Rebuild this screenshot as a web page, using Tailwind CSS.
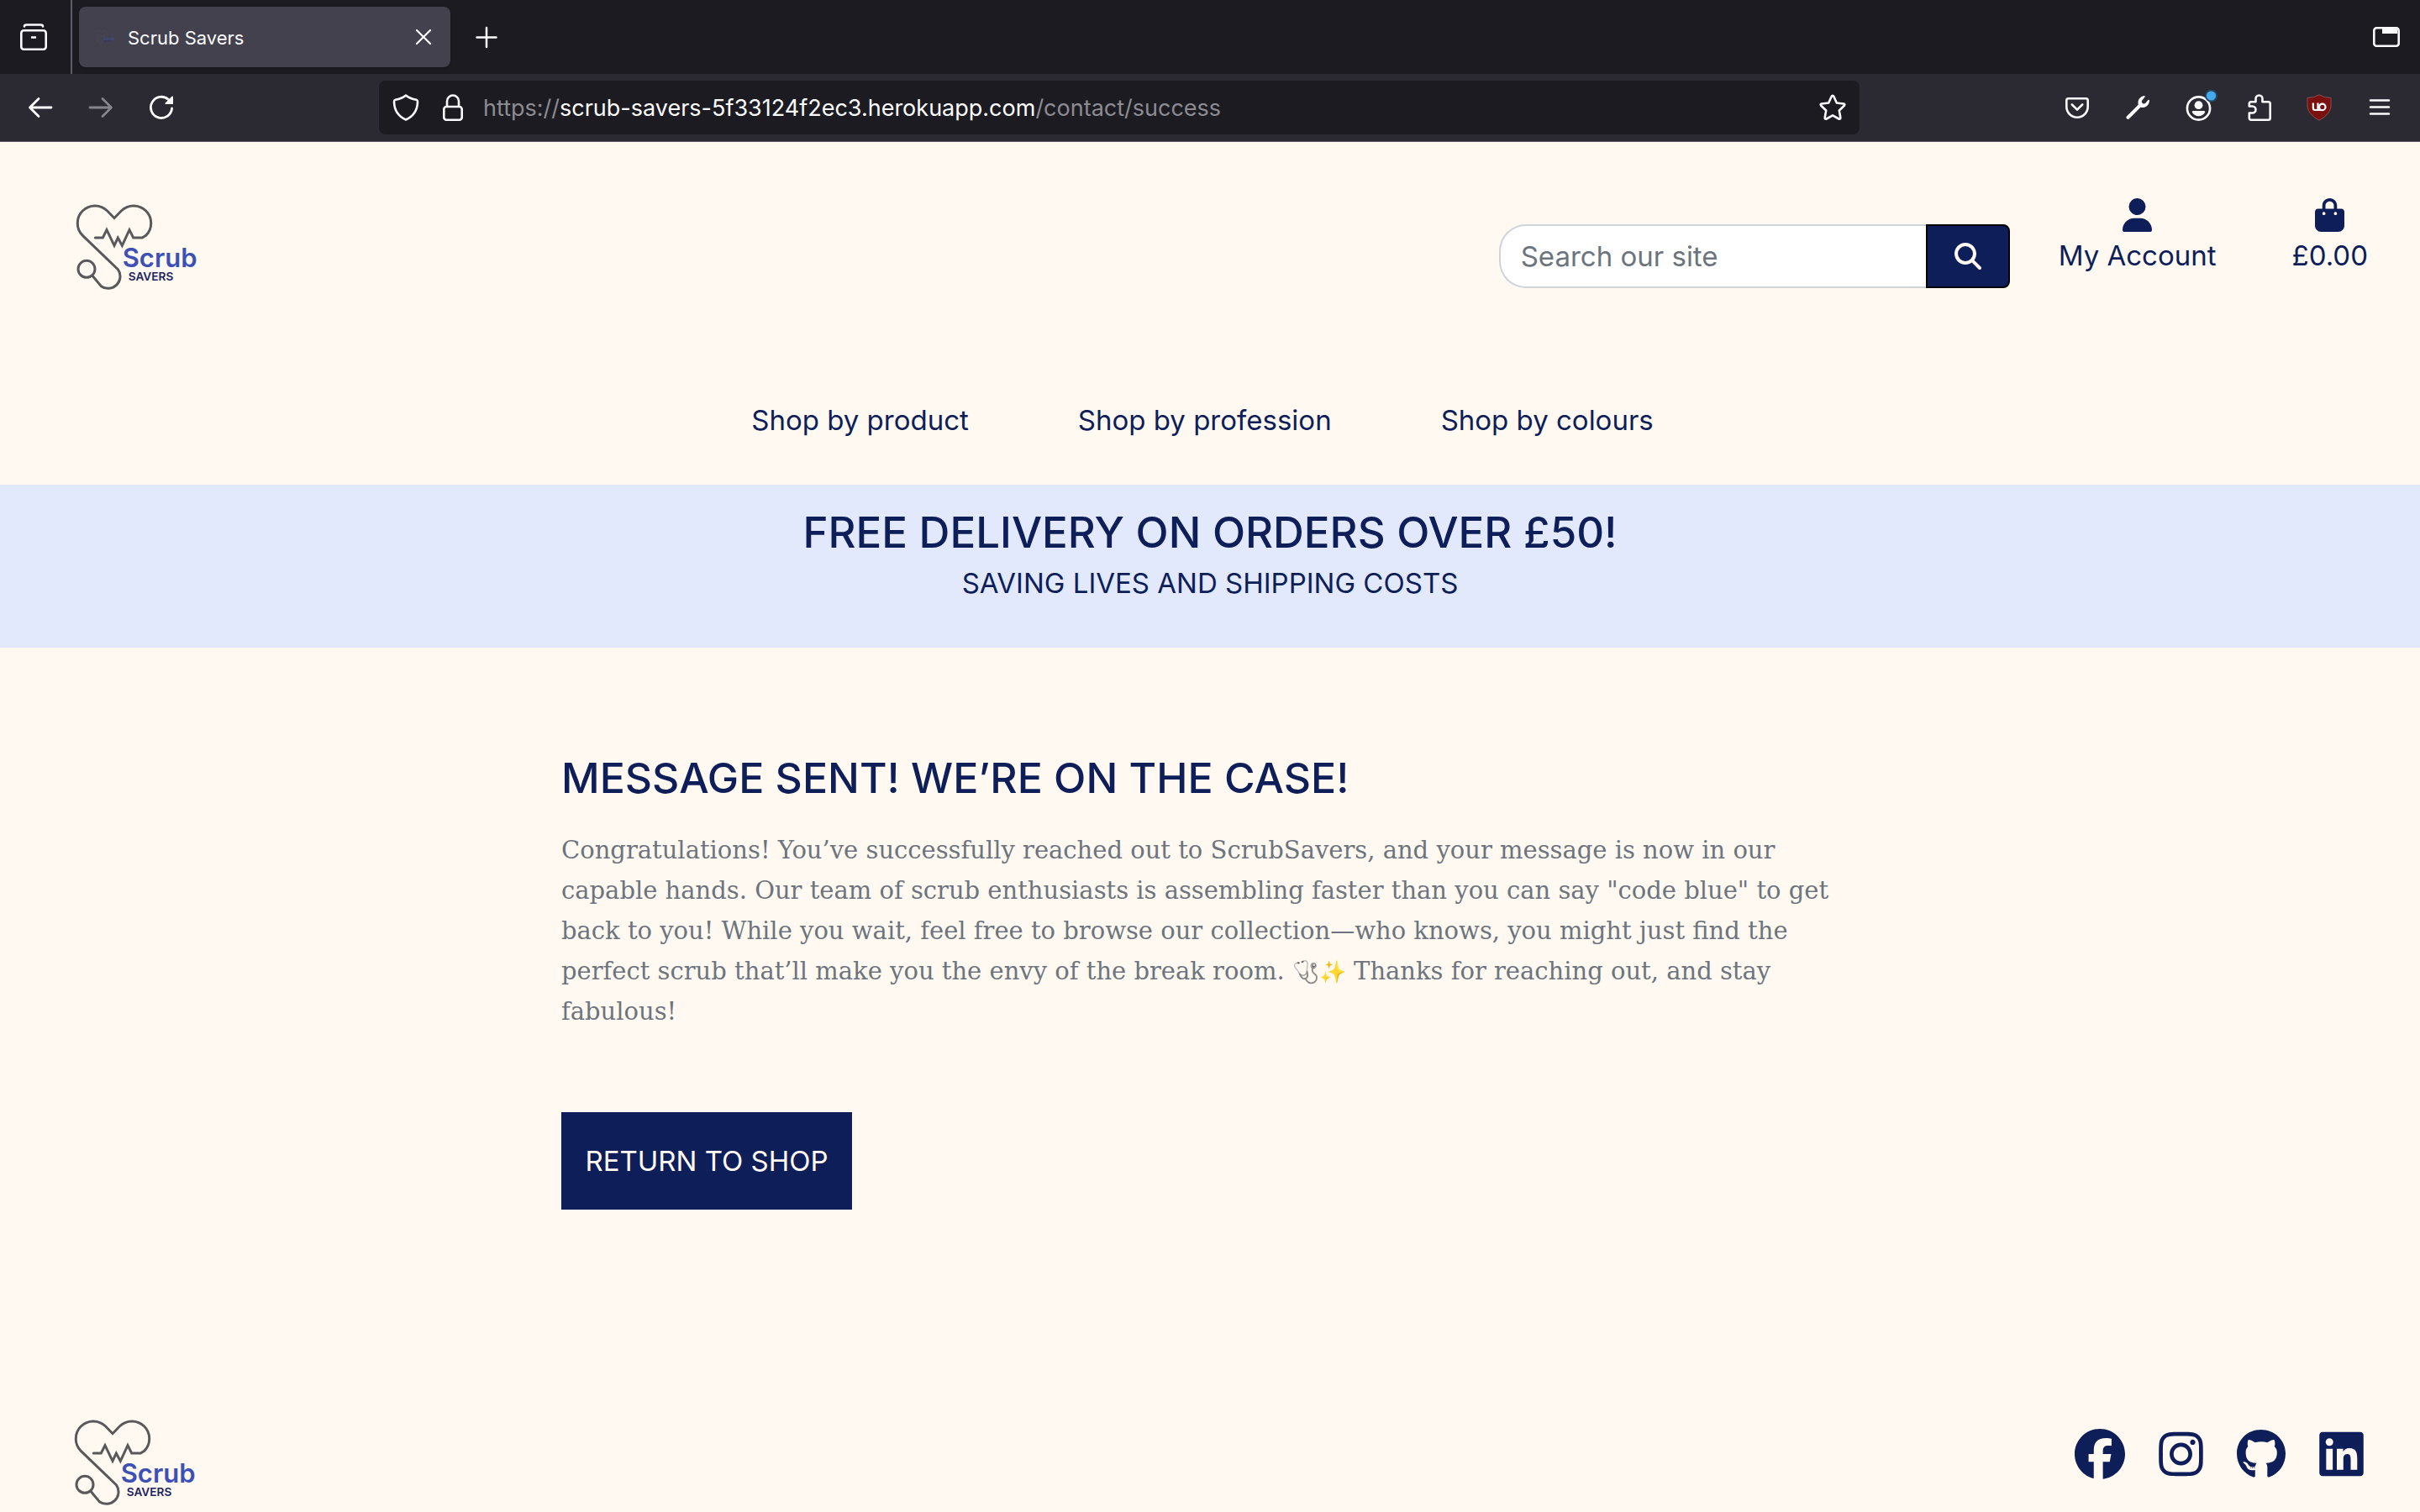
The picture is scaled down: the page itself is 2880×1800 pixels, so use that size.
<!DOCTYPE html>
<html lang="en">
<head>
<meta charset="utf-8">
<title>Scrub Savers</title>
<script src="https://cdn.jsdelivr.net/npm/@tailwindcss/browser@4"></script>
</head>
<body class="flex min-h-screen flex-col bg-[#fff9f1] font-['Inter',sans-serif] text-[33px]/[48px] text-[#0d1e59]">

<!-- Shared logo artwork -->
<svg class="hidden" aria-hidden="true">
  <symbol id="logo" viewBox="90 65 435 315">
    <path d="M160 188H187L201 160L228 216L241 188L256 216L282 160L296 188H328L341 180A62 62 0 0 0 253 92L228 118L203 92A62 62 0 0 0 115 180L241 301A43 43 0 0 1 181 361L150 324" fill="none" stroke="#58595b" stroke-width="9" stroke-linecap="round"/>
    <circle cx="129" cy="300" r="30" fill="none" stroke="#58595b" stroke-width="9"/>
    <text x="257" y="293" font-family="Inter, sans-serif" font-weight="600" font-size="93" fill="#3d51b5">Scrub</text>
    <text x="278" y="342" font-family="Inter, sans-serif" font-weight="600" font-size="41" fill="#1c2560">SAVERS</text>
  </symbol>
</svg>

<!-- Browser tab strip -->
<div class="flex h-[88px] items-center bg-[#1c1b22] pr-6 text-[#fbfbfe]">
  <button class="ml-6 size-8" aria-label="Recent browsing">
    <svg viewBox="0 0 32 32" fill="none" stroke="currentColor" stroke-width="2.6" stroke-linecap="round"><rect x="1.3" y="8.3" width="29.4" height="22.4" rx="3"/><path d="M5 3.5Q5 1.500 7.500 1.500H24.500Q27 1.500 27 3.500"/><path d="M13 16.500H19" stroke-linecap="butt"/></svg>
  </button>
  <div class="ml-7 h-full w-[2px] bg-[#5b5a66]"></div>
  <div class="ml-2 flex h-[72px] w-[442px] items-center rounded-lg bg-[#42414d] pr-4 pl-5 shadow">
    <svg class="h-4 w-[22px] opacity-60"><use href="#logo"/></svg>
    <span class="ml-4 flex-1 pt-[2px] text-[22px]/[28px]">Scrub Savers</span>
    <button class="size-8" aria-label="Close tab"><svg viewBox="0 0 32 32" fill="none" stroke="currentColor" stroke-width="2.200" stroke-linecap="round"><path d="M8 8L24 24M24 8L8 24"/></svg></button>
  </div>
  <button class="ml-[27px] size-8" aria-label="New tab"><svg viewBox="0 0 32 32" fill="none" stroke="currentColor" stroke-width="2.500" stroke-linecap="round"><path d="M16 5V28M4.500 16.500H27.500"/></svg></button>
  <button class="ml-auto size-8" aria-label="List all tabs"><svg viewBox="0 0 32 32" fill="none" stroke="currentColor" stroke-width="2.600"><rect x="1.300" y="5.300" width="29.400" height="21.400" rx="3"/><path d="M11 5H29V12H11Z" fill="currentColor" stroke="none"/></svg></button>
</div>

<!-- Browser toolbar -->
<div class="flex h-[81px] items-center gap-10 border-b border-[#5b5a66] bg-[#2b2a33] px-8 text-[#fbfbfe]">
  <button class="size-8" aria-label="Back"><svg viewBox="0 0 32 32" fill="none" stroke="currentColor" stroke-width="2.800" stroke-linecap="round" stroke-linejoin="round"><path d="M29 16H4M14 5.500L3.500 16L14 26.500"/></svg></button>
  <button class="size-8 text-[#85848a]" aria-label="Forward"><svg viewBox="0 0 32 32" fill="none" stroke="currentColor" stroke-width="2.800" stroke-linecap="round" stroke-linejoin="round"><path d="M3 16H28M18 5.500L28.500 16L18 26.500"/></svg></button>
  <button class="size-8" aria-label="Reload"><svg viewBox="0 0 32 32" fill="none" stroke="currentColor" stroke-width="2.800" stroke-linecap="round"><path d="M28.600 17A12.600 12.600 0 1 1 24.500 6.500"/><path d="M30 3V12H21Q20 11.500 20.500 10.700L28.500 2.700Q29.600 2 30 3Z" fill="currentColor" stroke="none"/></svg></button>
  <div class="mx-[203px] flex h-16 flex-1 items-center rounded-lg bg-[#1c1b22] px-4">
    <svg class="size-8" viewBox="0 0 32 32" fill="none" stroke="currentColor" stroke-width="2.600" stroke-linejoin="round"><path d="M16 1.500C19 4 24 6 28.500 6.800Q30 7.200 30 9C29.800 19 25 26.500 16 30.500C7 26.500 2.200 19 2 9Q2 7.200 3.500 6.800C8 6 13 4 16 1.500Z"/></svg>
    <svg class="ml-6 size-8" viewBox="0 0 32 32" fill="none" stroke="currentColor" stroke-width="2.600"><rect x="5.300" y="15" width="21.400" height="15.700" rx="3"/><path d="M9 15V8.500A7 7 0 0 1 23 8.500V15"/></svg>
    <div role="textbox" aria-label="Address" class="ml-5 flex-1 pt-[2px] text-[27px]/[36px] text-[#8c8b91]">https://<span class="text-[#fbfbfe]">scrub-savers-5f33124f2ec3.herokuapp.com</span>/contact/success</div>
    <button class="size-8" aria-label="Bookmark this page"><svg viewBox="0 0 32 32" fill="none" stroke="currentColor" stroke-width="2.600" stroke-linejoin="round"><path d="M14.700 2.800Q16 .800 17.300 2.800L20.800 10.500L29 11.500Q31.200 12 29.800 13.700L23.800 19.500L25.300 28Q25.400 30.400 23.300 29.500L16 25.400L8.700 29.500Q6.600 30.400 6.700 28L8.200 19.500L2.200 13.700Q.800 12 3 11.500L11.200 10.500Z"/></svg></button>
  </div>
  <button class="size-8" aria-label="Save to Pocket"><svg viewBox="0 0 32 32" fill="none" stroke="currentColor" stroke-width="2.600" stroke-linecap="round" stroke-linejoin="round"><path d="M5.500 5.300H26.500Q28.700 5.300 28.700 7.500V15A12.700 12.700 0 0 1 3.300 15V7.500Q3.300 5.300 5.500 5.300Z"/><path d="M9.800 12.500L16 18.700L22.200 12.500"/></svg></button>
  <button class="size-8" aria-label="Developer tools"><svg viewBox="0 0 32 32"><path fill="currentColor" d="M23.500 2C18.500 3 15.500 7.500 16.800 12.600L2.800 26.600A2.100 2.100 0 0 0 5.700 29.500L19.400 15.800C24.800 17 30 13.500 30 7.500C30 6.500 28.800 6.500 28.200 7.200L25.500 10.500A2.500 2.500 0 0 1 21.500 7.300L24.500 3.500C25.100 2.700 24.600 1.900 23.500 2Z"/></svg></button>
  <button class="size-8" aria-label="Account"><svg class="overflow-visible" viewBox="0 0 32 32"><circle cx="16.500" cy="17" r="13.600" fill="none" stroke="currentColor" stroke-width="2.600"/><circle cx="16.500" cy="13.200" r="4.900" fill="currentColor"/><path fill="currentColor" d="M10 20H23Q24.800 20 24.100 21.700A8.700 8.700 0 0 1 8.900 21.700Q8.200 20 10 20Z"/><circle cx="31.500" cy="2" r="7.500" fill="#26485f"/><circle cx="31.500" cy="2" r="5.600" fill="#45a9f0"/></svg></button>
  <button class="size-8" aria-label="Extensions"><svg viewBox="0 0 32 32" fill="none" stroke="currentColor" stroke-width="2.600" stroke-linejoin="round"><path d="M12.500 9.300V5.500A4 4 0 0 1 20.500 5.500V9.300H27.500Q29.700 9.300 29.700 11.500V28.500Q29.700 30.700 27.500 30.700H7Q4.800 30.700 4.800 28.500V22.500H8.500A4 4 0 0 0 8.500 14.500H4.800V11.500Q4.800 9.300 7 9.300Z"/></svg></button>
  <button class="size-8" aria-label="uBlock Origin"><svg viewBox="0 0 32 32"><path d="M16 .800Q22 4.500 30 4.500V15Q29 24 16 31.300Q3 24 2 15V4.500Q10 4.500 16 .800Z" fill="#7a110e" stroke="#9a5a5c" stroke-width=".8"/><path d="M8.800 10.500V16.500Q8.800 19 11.300 19H14.500V10.500M14.500 19H19.500" fill="none" stroke="#fff" stroke-width="2.200"/><circle cx="19.800" cy="15.400" r="3.700" fill="none" stroke="#fff" stroke-width="2.200"/></svg></button>
  <button class="size-8" aria-label="Open menu"><svg viewBox="0 0 32 32" stroke="currentColor" stroke-width="2.500" stroke-linecap="round"><path d="M5 7.500H27M5 15.500H27M5 23.500H27"/></svg></button>
</div>

<!-- Site header -->
<header class="pt-[67px] pb-[53px]">
  <div class="flex items-start justify-between pr-[62px] pl-[90px]">
    <a href="#" class="mt-[6px] block" aria-label="Scrub Savers home"><svg class="h-[105px] w-[145px]"><use href="#logo"/></svg></a>
    <div class="flex items-start gap-[58px]">
      <form class="mt-[31px] flex h-[76px] w-[608px]" onsubmit="return false">
        <input type="search" aria-label="Search our site" placeholder="Search our site" class="min-w-0 flex-1 rounded-l-[32px] border-2 border-r-0 border-[#ced4da] bg-white pl-6 placeholder:text-[#6c757d]">
        <button aria-label="Search" class="flex w-[100px] items-center justify-center rounded-r-lg border-2 border-black bg-[#0d1e59] text-[#fff9f1]">
          <svg class="size-8" viewBox="0 0 512 512" fill="currentColor"><path d="M416 208c0 45.900-14.900 88.300-40 122.700L502.600 457.400c12.500 12.500 12.500 32.800 0 45.300s-32.800 12.500-45.300 0L330.700 376c-34.400 25.200-76.800 40-122.700 40C93.100 416 0 322.900 0 208S93.100 0 208 0S416 93.100 416 208zM208 352a144 144 0 1 0 0-288 144 144 0 1 0 0 288z"/></svg>
        </button>
      </form>
      <div class="flex gap-[90px]">
        <a href="#" class="flex flex-col items-center gap-1">
          <svg class="h-10 w-[35px]" viewBox="0 0 448 512" fill="currentColor"><path d="M224 256A128 128 0 1 0 224 0a128 128 0 1 0 0 256zm-45.700 48C79.800 304 0 383.800 0 482.300C0 498.700 13.300 512 29.700 512H418.300c16.400 0 29.700-13.300 29.700-29.700C448 383.800 368.200 304 269.700 304H178.300z"/></svg>
          My Account
        </a>
        <a href="#" class="flex flex-col items-center gap-1">
          <svg class="h-10 w-[35px]" viewBox="0 0 448 512" fill="currentColor"><path d="M160 112c0-35.300 28.700-64 64-64s64 28.700 64 64v48H160V112zm-48 48H48c-26.500 0-48 21.500-48 48V416c0 53 43 96 96 96H352c53 0 96-43 96-96V208c0-26.500-21.500-48-48-48H336V112C336 50.100 285.900 0 224 0S112 50.100 112 112v48zm24 48a24 24 0 1 1 0 48 24 24 0 1 1 0-48zm152 24a24 24 0 1 1 48 0 24 24 0 1 1 -48 0z"/></svg>
          £0.00
        </a>
      </div>
    </div>
  </div>
  <nav class="mt-[129px] flex justify-center gap-[130px] pr-[18px]">
    <a href="#">Shop by product</a>
    <a href="#">Shop by profession</a>
    <a href="#">Shop by colours</a>
  </nav>
</header>

<!-- Delivery banner -->
<section class="bg-[#e2e9fd] pt-[27px] pb-[53px] text-center">
  <h2 class="text-[51px]/[60px] font-medium">FREE DELIVERY ON ORDERS OVER £50!</h2>
  <p class="mt-[6px]">SAVING LIVES AND SHIPPING COSTS</p>
</section>

<main class="mx-auto w-full max-w-[1544px] pt-[125px]">
  <h1 class="text-[50px]/[60px] font-medium">MESSAGE SENT! WE’RE ON THE CASE!</h1>
  <p class="mt-8 font-['DejaVu_Serif',serif] text-[29px]/[48px] text-[#6c757d]">Congratulations! You’ve successfully reached out to ScrubSavers, and your message is now in our capable hands. Our team of scrub enthusiasts is assembling faster than you can say "code blue" to get back to you! While you wait, feel free to browse our collection—who knows, you might just find the perfect scrub that’ll make you the envy of the break room. <span class="text-[26px]/[32px] grayscale">🩺</span><span class="text-[26px]/[32px]">✨</span> Thanks for reaching out, and stay fabulous!</p>
  <a href="#" class="mt-24 inline-flex h-[116px] w-[346px] items-center justify-center bg-[#0d1e59] text-[#fff9f1]">RETURN TO SHOP</a>
</main>

<footer class="mt-auto flex items-start justify-between pr-[67px] pb-[6px] pl-[88px]">
  <a href="#" aria-label="Scrub Savers home"><svg class="h-[105px] w-[145px]"><use href="#logo"/></svg></a>
  <div class="mt-3 flex items-center gap-10">
    <a href="#" aria-label="Facebook"><svg class="size-[60px]" viewBox="0 0 512 512" fill="currentColor"><path d="M512 256C512 114.600 397.400 0 256 0S0 114.600 0 256C0 376 82.700 476.800 194.200 504.500V334.200H141.400V256h52.800V222.300c0-87.100 39.400-127.500 125-127.500c16.200 0 44.200 3.200 55.700 6.400V172c-6-.6-16.500-1-29.600-1c-42 0-58.200 15.900-58.200 57.200V256h83.600l-14.400 78.200H287V510.100C413.800 494.800 512 386.900 512 256h0z"/></svg></a>
    <a href="#" aria-label="Instagram"><svg class="h-[60px] w-[53px]" viewBox="0 0 448 512" fill="currentColor"><path d="M224.100 141c-63.600 0-114.900 51.300-114.900 114.900s51.300 114.900 114.900 114.900S339 319.500 339 255.900 287.700 141 224.100 141zm0 189.600c-41.100 0-74.700-33.500-74.700-74.700s33.500-74.700 74.700-74.700 74.700 33.500 74.700 74.700-33.600 74.700-74.700 74.700zm146.400-194.300c0 14.900-12 26.800-26.800 26.800-14.900 0-26.800-12-26.800-26.800s12-26.800 26.800-26.800 26.800 12 26.800 26.800zm76.100 27.200c-1.700-35.900-9.900-67.700-36.200-93.900-26.200-26.200-58-34.400-93.900-36.200-37-2.100-147.900-2.100-184.900 0-35.800 1.700-67.600 9.900-93.900 36.100s-34.400 58-36.200 93.900c-2.100 37-2.100 147.900 0 184.900 1.700 35.900 9.900 67.700 36.200 93.900s58 34.400 93.900 36.200c37 2.100 147.900 2.100 184.900 0 35.900-1.700 67.700-9.900 93.900-36.200 26.200-26.200 34.400-58 36.200-93.900 2.100-37 2.100-147.800 0-184.800zM398.800 388c-7.800 19.600-22.900 34.700-42.600 42.600-29.500 11.700-99.500 9-132.100 9s-102.700 2.600-132.100-9c-19.600-7.800-34.700-22.900-42.600-42.600-11.700-29.500-9-99.500-9-132.100s-2.600-102.700 9-132.100c7.800-19.600 22.900-34.700 42.600-42.600 29.500-11.700 99.500-9 132.100-9s102.700-2.600 132.100 9c19.600 7.800 34.700 22.900 42.600 42.600 11.700 29.500 9 99.500 9 132.100s2.700 102.700-9 132.100z"/></svg></a>
    <a href="#" aria-label="GitHub"><svg class="h-[60px] w-[58px]" viewBox="0 0 496 512" fill="currentColor"><path d="M165.900 397.400c0 2-2.300 3.600-5.200 3.600-3.300.3-5.600-1.300-5.600-3.600 0-2 2.300-3.600 5.200-3.600 3-.3 5.600 1.300 5.600 3.600zm-31.100-4.500c-.7 2 1.300 4.300 4.300 4.900 2.600 1 5.600 0 6.200-2s-1.300-4.300-4.300-5.200c-2.600-.7-5.500.3-6.200 2.300zm44.200-1.700c-2.900.7-4.900 2.600-4.600 4.900.3 2 2.900 3.300 5.900 2.600 2.900-.7 4.900-2.600 4.600-4.600-.3-1.900-3-3.200-5.900-2.900zM244.800 8C106.100 8 0 113.300 0 252c0 110.900 69.800 205.800 169.500 239.200 12.800 2.300 17.300-5.600 17.300-12.100 0-6.200-.3-40.400-.3-61.400 0 0-70 15-84.700-29.800 0 0-11.400-29.100-27.800-36.600 0 0-22.900-15.700 1.600-15.400 0 0 24.900 2 38.600 25.800 21.900 38.600 58.600 27.500 72.900 20.900 2.300-16 8.800-27.100 16-33.700-55.900-6.200-112.300-14.300-112.300-110.500 0-27.500 7.600-41.300 23.600-58.900-2.600-6.500-11.100-33.300 2.600-67.900 20.900-6.500 69 27 69 27 20-5.600 41.500-8.500 62.800-8.500s42.800 2.900 62.800 8.500c0 0 48.100-33.600 69-27 13.700 34.700 5.200 61.400 2.600 67.900 16 17.700 25.800 31.500 25.800 58.900 0 96.500-58.900 104.200-114.800 110.500 9.200 7.900 17 22.900 17 46.400 0 33.700-.3 75.400-.3 83.600 0 6.500 4.600 14.400 17.300 12.100C428.200 457.800 496 362.900 496 252 496 113.300 383.500 8 244.800 8z"/></svg></a>
    <a href="#" aria-label="LinkedIn"><svg class="h-[60px] w-[53px]" viewBox="0 0 448 512" fill="currentColor"><path d="M416 32H31.900C14.300 32 0 46.500 0 64.300v383.400C0 465.500 14.300 480 31.900 480H416c17.600 0 32-14.500 32-32.300V64.300c0-17.800-14.400-32.300-32-32.300zM135.400 416H69V202.200h66.500V416zm-33.200-243c-21.300 0-38.500-17.300-38.500-38.500S80.900 96 102.200 96c21.200 0 38.500 17.300 38.500 38.500 0 21.300-17.200 38.500-38.500 38.500zm282.100 243h-66.400V312c0-24.800-.5-56.700-34.500-56.700-34.600 0-39.900 27-39.900 54.900V416h-66.400V202.200h63.700v29.200h.9c8.900-16.800 30.600-34.500 62.900-34.500 67.200 0 79.700 44.300 79.700 101.900V416z"/></svg></a>
  </div>
</footer>
</body>
</html>
